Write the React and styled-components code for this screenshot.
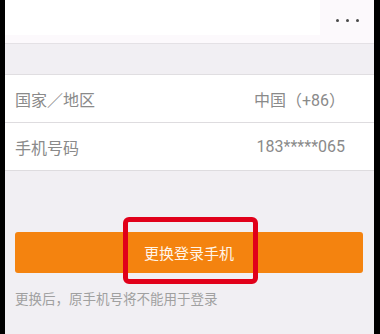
import React from 'react'
import styled, { createGlobalStyle } from 'styled-components'

const GlobalStyle = createGlobalStyle`
  html, body {
    margin: 0;
    padding: 0;
    background: #000;
  }
  body {
    font-family: Roboto, "Noto Sans CJK SC", sans-serif;
  }
`

const Frame = styled.div`
  width: 380px;
  height: 334px;
  box-sizing: border-box;
  padding: 0 6px 0 5px;
  background: #000;
  overflow: hidden;
`

const Screen = styled.div`
  height: 100%;
  display: flex;
  flex-direction: column;
  background: #f1eff3;
`

const Header = styled.div`
  height: 43px;
  display: flex;
  background: #fcf9fc;
  border-bottom: 1px solid #e4e1e5;
`

const TitleBox = styled.div`
  flex: 1;
  height: 35px;
  background: #fff;
`

const MoreButton = styled.div`
  width: 54px;
  height: 40px;
  display: flex;
  align-items: center;
  justify-content: center;
  gap: 7px;
`

const Dot = styled.span`
  width: 3px;
  height: 3px;
  border-radius: 50%;
  background: #4a4a4a;
`

const Spacer = styled.div`
  height: 30px;
`

const Card = styled.div`
  background: #fff;
  border-top: 1px solid #e0dee1;
`

const Row = styled.div`
  height: 47px;
  display: flex;
  align-items: center;
  justify-content: space-between;
  padding: 0 29px 0 10px;
  border-bottom: 1px solid #dedcdf;
`

const Label = styled.span`
  font-size: 16px;
  color: #8a8a8a;
`

const Value = styled.span`
  font-size: 16px;
  color: #8a8a8a;
`

const Actions = styled.div`
  padding: 61px 11px 0 10px;
`

const ButtonWrap = styled.div`
  position: relative;
`

const PrimaryButton = styled.button`
  width: 100%;
  height: 41px;
  border: none;
  border-radius: 3px;
  background: #f4830f;
  color: #fff4e8;
  font-family: Roboto, "Noto Sans CJK SC", sans-serif;
  font-size: 15px;
  padding: 0;
`

const Highlight = styled.div`
  position: absolute;
  left: 108px;
  top: -15px;
  width: 135px;
  height: 67px;
  box-sizing: border-box;
  border: 5px solid #e1001a;
  border-radius: 6px;
  pointer-events: none;
`

const Hint = styled.p`
  margin: 17px 0 0;
  font-size: 13.5px;
  line-height: 18px;
  color: #a0a0a0;
`

const App = () => {
  return (
    <Frame>
      <GlobalStyle />
      <Screen>
        <Header>
          <TitleBox />
          <MoreButton>
            <Dot />
            <Dot />
            <Dot />
          </MoreButton>
        </Header>
        <Spacer />
        <Card>
          <Row>
            <Label>国家／地区</Label>
            <Value>中国（+86）</Value>
          </Row>
          <Row>
            <Label>手机号码</Label>
            <Value>183*****065</Value>
          </Row>
        </Card>
        <Actions>
          <ButtonWrap>
            <PrimaryButton>更换登录手机</PrimaryButton>
            <Highlight />
          </ButtonWrap>
          <Hint>更换后，原手机号将不能用于登录</Hint>
        </Actions>
      </Screen>
    </Frame>
  )
}

export default App
